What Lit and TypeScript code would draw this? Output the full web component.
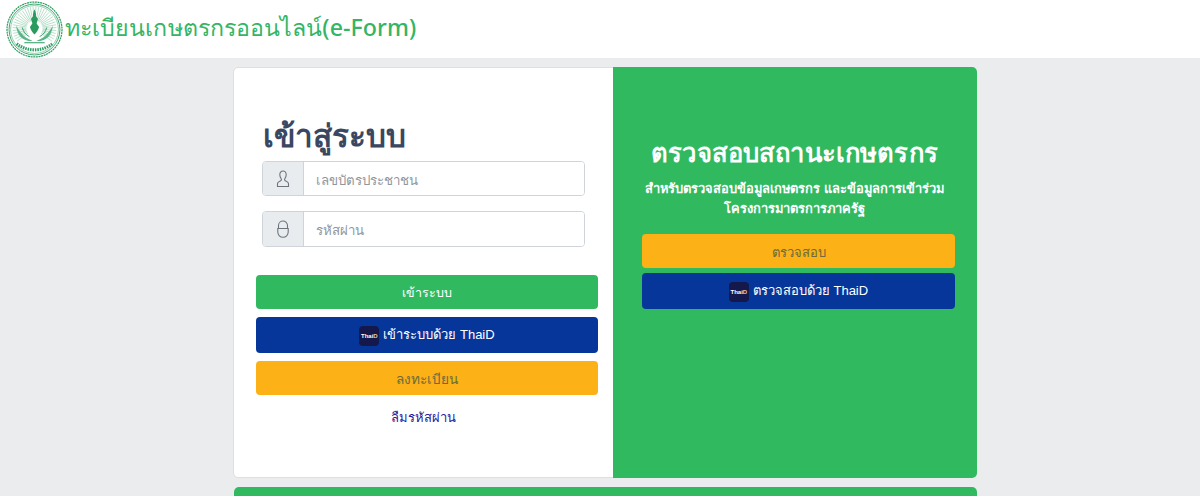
import { LitElement, html, css, svg } from 'lit';
import { customElement } from 'lit/decorators.js';

// sun rays behind the figure of the seal, upper part only
const rays = Array.from({ length: 34 }, (_, i) => {
    const a = Math.PI * (0.8 + (i / 33) * 1.4);
    return svg`<line x1=${28 + Math.cos(a) * 8} y1=${27 + Math.sin(a) * 8}
        x2=${28 + Math.cos(a) * 21.5} y2=${27 + Math.sin(a) * 21.5}></line>`;
});

const seal = html`
    <svg class="seal" viewBox="0 0 56 56" fill="none" stroke="#2e9e63">
        <circle cx="28" cy="28" r="27" stroke-width="1.2" stroke-dasharray="2 .6"></circle>
        <circle cx="28" cy="28" r="25" stroke-width=".9"></circle>
        <circle cx="28" cy="28" r="23.500" stroke-width=".5"></circle>
        <g stroke-width=".6" stroke="#8ccca8">${rays}</g>
        <path d="M28 8c-1.200 3-1.800 5-1.400 7l-2 2.500c.3 2 1 3 1.300 4.500l-2.400 3.500c.8 3 2.600 5.500 4.500 7.500 1.900-2 3.700-4.500 4.500-7.500L30.100 22c.3-1.500 1-2.500 1.300-4.500l-2-2.500c.4-2 -.2-4-1.400-7z"
              fill="#2b9a5e" stroke="none"></path>
        <path d="M10 24c.4 6 3 11 7.500 13.500 3 1.700 6 2 8.500 1.500-5-1.500-8.500-4-11-7.500-2-2.500-3.800-5-5-7.500z"
              fill="#5cb588" stroke="none"></path>
        <path d="M46 24c-.4 6-3 11-7.500 13.500-3 1.700-6 2-8.500 1.500 5-1.500 8.500-4 11-7.500 2-2.500 3.800-5 5-7.500z"
              fill="#5cb588" stroke="none"></path>
        <path d="M16 26c1 4 3 7 7 9M40 26c-1 4-3 7-7 9" stroke-width=".9"></path>
        <path d="M18 41h20" stroke-width="1"></path>
        <path d="M10.500 42c10 8 25 8 35 0" stroke-width="3" stroke-dasharray="1.500 .9"></path>
    </svg>`;

const thaidLogo = html`
    <span class="thaid-logo"><span>Thai<i>D</i></span></span>`;

@customElement('app-root')
export class AppRoot extends LitElement {
    static styles = css`
        :host {
            display: block;
            height: 496px;
            overflow: hidden;
            background: #ebecee;
            font-family: "Noto Sans", "Liberation Sans", Tahoma, sans-serif;
            color: #495057;
        }
        * { box-sizing: border-box; }
        header {
            display: flex;
            align-items: center;
            height: 58px;
            padding-left: 6px;
            background: #fff;
            color: #34b565;
            font-size: 23.2px;
            font-weight: 500;
            letter-spacing: .07px;
        }
        .seal { width: 57px; height: 57px; flex: none; }
        header span { margin-left: 2px; padding-bottom: 4px; }
        .card {
            display: flex;
            width: 744px;
            height: 411px;
            margin: 9px 0 0 233px;
            background: #fff;
            border: 1px solid #dcdfe3;
            border-radius: 5px;
        }
        .left {
            width: 379px;
            flex: none;
            padding: 45px 15px 0 22px;
        }
        h1 {
            margin: 0 0 4px 7px;
            height: 44px;
            font-size: 31.4px;
            line-height: 44px;
            font-weight: 600;
            color: #3a4763;
        }
        .group {
            display: flex;
            width: 323px;
            height: 35px;
            margin: 0 0 15px 6px;
            border: 1px solid #ced4da;
            border-radius: 4px;
            overflow: hidden;
        }
        .group + .group { height: 36px; }
        .addon {
            display: flex;
            align-items: center;
            justify-content: center;
            width: 41px;
            background: #e9ecef;
            border-right: 1px solid #ced4da;
        }
        .addon svg { width: 16px; height: 20px; }
        input {
            flex: 1;
            min-width: 0;
            border: 0;
            outline: 0;
            padding: 2px 12px 0;
            font: inherit;
            font-size: 13.3px;
            background: #fff;
        }
        input::placeholder { color: #8f979e; }
        .btn {
            display: flex;
            align-items: center;
            justify-content: center;
            gap: 4px;
            width: 100%;
            height: 34px;
            padding-top: 2px;
            border-radius: 4px;
            font-size: 13px;
        }
        .left .btn { font-size: 13.6px; }
        .left .green { background: #31b95f; color: #fff; font-size: 12.5px; }
        .left .blue, .blue {
            height: 36px;
            padding: 0 0 2px;
            background: #07369b;
            color: #fff;
            font-family: "Liberation Sans", "Noto Sans", sans-serif;
            font-size: 13px;
        }
        .amber { background: #fcb116; color: #6c6a3c; }
        .actions { display: flex; flex-direction: column; gap: 8px; margin-top: 28px; }
        .forgot {
            margin-top: 12px;
            padding-right: 8px;
            text-align: center;
            font-size: 13px;
            font-weight: 500;
            color: #2b1a9a;
        }
        .thaid-logo {
            display: flex;
            align-items: center;
            justify-content: center;
            width: 20px;
            height: 20px;
            margin-top: 4px;
            border-radius: 4px;
            background: #14184a;
            overflow: hidden;
        }
        .thaid-logo span {
            color: #fff;
            font: 700 6px "Liberation Sans", sans-serif;
        }
        .thaid-logo i { font-style: normal; color: #e8c9a0; }
        .right {
            flex: 1;
            margin: -1px -1px -1px 0;
            padding: 68px 22px 0 29px;
            background: #31b95f;
            border-radius: 0 5px 5px 0;
            color: #fff;
            text-align: center;
        }
        h2 {
            margin: 0;
            height: 36px;
            padding-right: 8px;
            font-size: 25.6px;
            line-height: 36px;
            font-weight: 700;
            letter-spacing: .15px;
            white-space: nowrap;
        }
        .right p {
            margin: 7px 0 0;
            padding-right: 8px;
            font-size: 12.9px;
            font-weight: 600;
            line-height: 20px;
        }
        .right .actions { gap: 5px; margin-top: 16px; }
        .strip {
            width: 743px;
            height: 40px;
            margin: 9px 0 0 234px;
            background: #31b95f;
            border-radius: 5px 5px 0 0;
        }
    `;

    render() {
        return html`
            <header>${seal}<span>ทะเบียนเกษตรกรออนไลน์(e-Form)</span></header>
            <main class="card">
                <section class="left">
                    <h1>เข้าสู่ระบบ</h1>
                    <div class="group">
                        <div class="addon">
                            <svg viewBox="0 0 16 20" fill="none" stroke="#6c757d" stroke-width="1.1">
                                <path d="M8 2C5.900 2 4.800 3.600 4.800 5.800c0 1.700.7 3 1.400 4 .4.6.2 1.500-.5 1.900l-2 1.200c-.9.6-1.200 1.200-1.200 2.100v2.500h11v-2.500c0-.9-.3-1.500-1.200-2.100l-2-1.200c-.7-.4-.9-1.300-.5-1.900.7-1 1.400-2.300 1.400-4C11.200 3.600 10.100 2 8 2z"></path>
                            </svg>
                        </div>
                        <input placeholder="เลขบัตรประชาชน" />
                    </div>
                    <div class="group">
                        <div class="addon">
                            <svg viewBox="0 0 16 20" fill="none" stroke="#6c757d" stroke-width="1.1">
                                <path d="M3.500 10V6.500a4.500 4.500 0 0 1 9 0V10"></path>
                                <path d="M2.800 9.500h10.400v3.600a5.200 5.200 0 0 1-10.400 0z"></path>
                            </svg>
                        </div>
                        <input placeholder="รหัสผ่าน" />
                    </div>
                    <div class="actions">
                        <div class="btn green">เข้าระบบ</div>
                        <div class="btn blue">${thaidLogo}เข้าระบบด้วย ThaiD</div>
                        <div class="btn amber">ลงทะเบียน</div>
                    </div>
                    <div class="forgot">ลืมรหัสผ่าน</div>
                </section>
                <section class="right">
                    <h2>ตรวจสอบสถานะเกษตรกร</h2>
                    <p>สำหรับตรวจสอบข้อมูลเกษตรกร และข้อมูลการเข้าร่วม<br />โครงการมาตรการภาครัฐ</p>
                    <div class="actions">
                        <div class="btn amber">ตรวจสอบ</div>
                        <div class="btn blue">${thaidLogo}ตรวจสอบด้วย ThaiD</div>
                    </div>
                </section>
            </main>
            <div class="strip"></div>
        `;
    }
}
